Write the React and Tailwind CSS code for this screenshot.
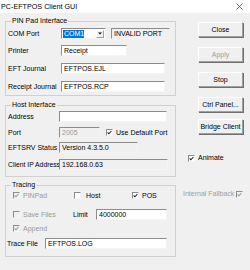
import React from "react";

const sunk = "border border-t-[#8c8c8c] border-l-[#8c8c8c] border-b-[#f4f4f4] border-r-[#f4f4f4]";

function Field({ w, gray, dim, children }) {
  return (
    <div className={`h-[11px] flex items-center pl-[2px] whitespace-nowrap overflow-hidden ${sunk} ${w} ${gray ? "bg-[#f0f0f0]" : "bg-white"} ${dim ? "text-[#9a9a9a]" : ""}`}>
      {children}
    </div>
  );
}

function Check({ checked, disabled }) {
  return (
    <div className={`w-[7px] h-[7px] shrink-0 ${sunk} ${disabled ? "bg-[#f0f0f0]" : "bg-white"} flex items-center justify-center`}>
      {checked && (
        <svg width="5" height="5" viewBox="0 0 5 5">
          <polyline points="0.6,2.4 1.9,3.8 4.4,1" fill="none" stroke={disabled ? "#9a9a9a" : "#222"} strokeWidth="1.1" />
        </svg>
      )}
    </div>
  );
}

function Btn({ children, disabled, mt }) {
  return (
    <div className={`${mt} ml-[22px] w-[45px] h-[15px] flex items-center justify-center bg-[#f0f0f0] border border-t-white border-l-white border-b-[#a0a0a0] border-r-[#a0a0a0] shadow-[1px_1px_0_#6f6f6f] ${disabled ? "text-[#a0a0a0]" : ""}`}>
      {children}
    </div>
  );
}

function Legend({ children }) {
  return <legend className="ml-[5px] px-[1px] leading-[8px]">{children}</legend>;
}

export default function App() {
  return (
    <div className="w-[250px] h-[270px] bg-[#f0f0f0] font-['Liberation_Sans',Arial,sans-serif] text-[7px] leading-[8px] text-black overflow-hidden">
      <div className="h-[13px] bg-white flex items-center justify-between pl-[1px] pr-[7px]">
        <span className="text-[7.2px]">PC-EFTPOS Client GUI</span>
        <svg width="7" height="7" viewBox="0 0 7 7">
          <path d="M0.5 0.5L6.5 6.5M6.5 0.5L0.5 6.5" stroke="#333" strokeWidth="0.7" />
        </svg>
      </div>
      <div className="flex">
        <div className="w-[176px] pl-[5px] flex flex-col">
          <fieldset className="mt-[4px] w-[171px] border border-[#d0d0d0] pt-[3px] pb-[3px]">
            <Legend>PIN Pad Interface</Legend>
            <div className="flex items-center h-[11px]">
              <div className="w-[55px] pl-[2px]">COM Port</div>
              <div className={`w-[45px] h-[11px] bg-white ${sunk} flex items-center`}>
                <div className="ml-[1px] w-[21px] h-[8px] bg-[#0078d7] text-white flex items-center pl-[1px]">COM1</div>
                <div className="ml-[12px] w-[8px] h-[8px] bg-[#f0f0f0] border border-t-white border-l-white border-b-[#a0a0a0] border-r-[#a0a0a0] flex items-center justify-center">
                  <svg width="4" height="3" viewBox="0 0 4 3"><path d="M0 0.5H4L2 2.5Z" fill="#111" /></svg>
                </div>
              </div>
              <div className="ml-[5px]"><Field w="w-[59px]" gray>INVALID PORT</Field></div>
            </div>
            <div className="flex items-center h-[11px] mt-[6px]">
              <div className="w-[55px] pl-[2px]">Printer</div>
              <Field w="w-[66px]">Receipt</Field>
            </div>
            <div className="flex items-center h-[11px] mt-[7px]">
              <div className="w-[55px] pl-[2px]">EFT Journal</div>
              <Field w="w-[104px]">EFTPOS.EJL</Field>
            </div>
            <div className="flex items-center h-[11px] mt-[7px]">
              <div className="w-[55px] pl-[2px] whitespace-nowrap">Receipt Journal</div>
              <Field w="w-[104px]">EFTPOS.RCP</Field>
            </div>
          </fieldset>

          <fieldset className="mt-[5px] w-[171px] border border-[#d0d0d0] pt-[2px] pb-[6px]">
            <Legend>Host Interface</Legend>
            <div className="flex items-center h-[11px]">
              <div className="w-[53px] pl-[2px]">Address</div>
              <Field w="w-[108px]"></Field>
            </div>
            <div className="flex items-center h-[11px] mt-[5px]">
              <div className="w-[53px] pl-[2px]">Port</div>
              <Field w="w-[41px]" gray dim>2005</Field>
              <div className="ml-[6px]"><Check checked /></div>
              <span className="ml-[3px] whitespace-nowrap">Use Default Port</span>
            </div>
            <div className="flex items-center h-[11px] mt-[4px]">
              <div className="w-[53px] pl-[2px] whitespace-nowrap">EFTSRV Status</div>
              <Field w="w-[79px]" gray>Version 4.3.5.0</Field>
            </div>
            <div className="flex items-center h-[11px] mt-[6px]">
              <div className="w-[53px] pl-[2px] whitespace-nowrap text-[6.8px]">Client IP Address</div>
              <Field w="w-[109px]" gray>192.168.0.63</Field>
            </div>
          </fieldset>

          <fieldset className="mt-[4px] w-[171px] border border-[#d0d0d0] pt-[1px] pb-[7px]">
            <Legend>Tracing</Legend>
            <div className="flex items-center h-[11px] pl-[7px]">
              <div className="w-[61px] flex items-center text-[#9a9a9a]"><Check checked disabled /><span className="ml-[3px]">PINPad</span></div>
              <div className="w-[58px] flex items-center"><Check /><span className="ml-[5px]">Host</span></div>
              <div className="flex items-center"><Check checked /><span className="ml-[3px]">POS</span></div>
            </div>
            <div className="flex items-center h-[11px] pl-[7px] mt-[8px]">
              <div className="w-[60px] flex items-center text-[#9a9a9a]"><Check disabled /><span className="ml-[3px] whitespace-nowrap">Save Files</span></div>
              <div className="w-[23px]">Limit</div>
              <Field w="w-[71px]">4000000</Field>
            </div>
            <div className="flex items-center h-[11px] pl-[7px] mt-[3px] text-[#9a9a9a]">
              <Check checked disabled /><span className="ml-[3px]">Append</span>
            </div>
            <div className="flex items-center h-[11px] pl-[1px] mt-[4px]">
              <div className="w-[38px] whitespace-nowrap">Trace File</div>
              <Field w="w-[122px]">EFTPOS.LOG</Field>
            </div>
          </fieldset>
        </div>

        <div className="flex-1 flex flex-col">
          <Btn mt="mt-[9px]">Close</Btn>
          <Btn mt="mt-[10px]" disabled>Apply</Btn>
          <Btn mt="mt-[10px]">Stop</Btn>
          <Btn mt="mt-[10px]">Ctrl Panel...</Btn>
          <Btn mt="mt-[7px]">Bridge Client</Btn>
          <div className="mt-[19px] h-[10px] pl-[12px] flex items-center">
            <Check checked /><span className="ml-[3px]">Animate</span>
          </div>
          <div className="mt-[26px] h-[10px] pl-[7px] flex items-center">
            <span className="w-[53px] whitespace-nowrap text-[#a0a0a0]">Internal Fallback</span>
            <Check checked disabled />
          </div>
        </div>
      </div>
    </div>
  );
}
